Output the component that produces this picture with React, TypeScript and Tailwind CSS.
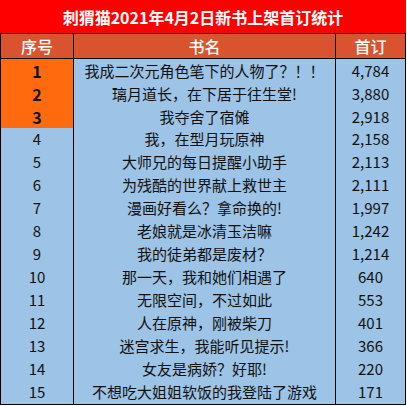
const rows: [string, string][] = [
  ["我成二次元角色笔下的人物了？！！", "4,784"],
  ["璃月道长，在下居于往生堂!", "3,880"],
  ["我夺舍了宿傩", "2,918"],
  ["我，在型月玩原神", "2,158"],
  ["大师兄的每日提醒小助手", "2,113"],
  ["为残酷的世界献上救世主", "2,111"],
  ["漫画好看么？拿命换的!", "1,997"],
  ["老娘就是冰清玉洁嘛", "1,242"],
  ["我的徒弟都是废材？", "1,214"],
  ["那一天，我和她们相遇了", "640"],
  ["无限空间，不过如此", "553"],
  ["人在原神，刚被柴刀", "401"],
  ["迷宫求生，我能听见提示!", "366"],
  ["女友是病娇？好耶!", "220"],
  ["不想吃大姐姐软饭的我登陆了游戏", "171"],
];

export default function App() {
  return (
    <div
      className="w-[407px] h-[406px] bg-white"
      style={{ fontFamily: '"Microsoft YaHei", "Noto Sans CJK SC", sans-serif' }}
    >
      <div className="w-[406px]">
        <div className="h-[34px] bg-[#ff0000] border-b border-black flex items-center justify-center text-white font-bold text-[16px]">
          刺猬猫2021年4月2日新书上架首订统计
        </div>
        <div className="grid grid-cols-[74px_262px_70px] h-[25px] bg-[#da532f] text-white text-[16px] font-medium">
          <div className="border-l border-r border-b border-black flex items-center justify-center">序号</div>
          <div className="border-r border-b border-black flex items-center justify-center">书名</div>
          <div className="border-r border-b border-black flex items-center justify-center">首订</div>
        </div>
        {rows.map(([name, num], i) => {
          const top = i < 3;
          return (
            <div key={i} className="grid grid-cols-[74px_262px_70px] h-[23px] text-[15px] text-[#111]">
              <div
                className={
                  top
                    ? "border-l border-r border-b border-black bg-[#ff6a0e] flex items-center justify-center font-bold text-[16px]"
                    : "border-l border-r border-b border-black bg-[#9dc3e6] flex items-center justify-center"
                }
              >
                {i + 1}
              </div>
              <div className="border-r border-b border-black bg-[#9dc3e6] flex items-center justify-center whitespace-nowrap">
                {name}
              </div>
              <div className="border-r border-b border-black bg-[#9dc3e6] flex items-center justify-center">
                {num}
              </div>
            </div>
          );
        })}
      </div>
    </div>
  );
}
